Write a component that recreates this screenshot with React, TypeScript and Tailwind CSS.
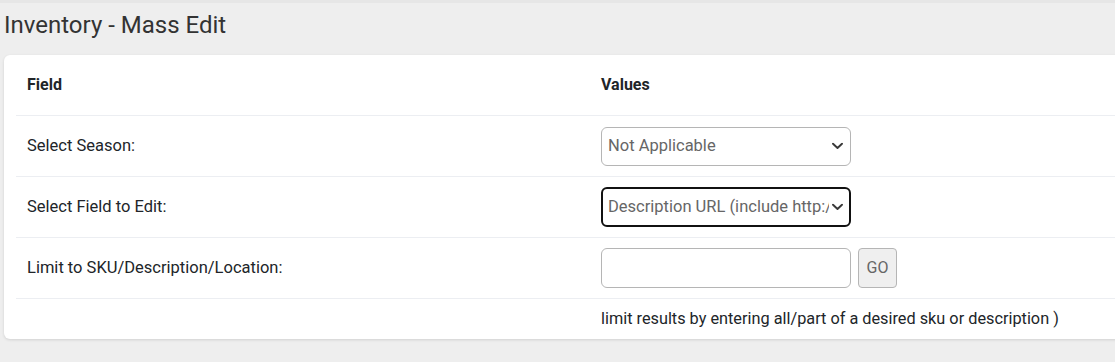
import React from "react";

const font = { fontFamily: "Roboto, 'Liberation Sans', sans-serif" };

function Chevron() {
  return (
    <svg className="absolute right-[8px] top-1/2 -translate-y-1/2 pointer-events-none" width="11" height="7" viewBox="0 0 11 7" fill="none">
      <path d="M1 1.2 L5.5 5.5 L10 1.2" stroke="#3a3a3a" strokeWidth="1.9" strokeLinecap="round" strokeLinejoin="round" />
    </svg>
  );
}

export default function App() {
  return (
    <div className="w-[1115px] h-[362px] overflow-hidden bg-[#eeeeee] border-t-[3px] border-[#e6e6e6]" style={font}>
      <div className="h-[52px] pl-[4px] pt-[10px]">
        <h1 className="text-[24px] text-[#333333] font-normal leading-[24px]">Inventory - Mass Edit</h1>
      </div>
      <div className="ml-[4px] w-[1125px] bg-white rounded-[6px] shadow-[0_1px_3px_rgba(0,0,0,0.12)] px-[12px]">
        <div className="flex h-[60px] items-center text-[16px] font-bold text-[#212529]">
          <div className="w-[574px] pl-[11px]">Field</div>
          <div className="pl-[11px]">Values</div>
        </div>
        <div className="flex h-[61px] items-center border-t border-[#eceef2] text-[16.5px] text-[#212529]">
          <div className="w-[574px] pl-[11px]">Select Season:</div>
          <div className="pl-[11px]">
            <div className="relative w-[250px]">
              <select className="appearance-none w-[250px] h-[39px] rounded-[6px] border border-[#b5b5b5] bg-white pl-[6px] pr-[20px] text-[16.5px] text-[#666666] outline-none" style={font} defaultValue="na">
                <option value="na">Not Applicable</option>
              </select>
              <Chevron />
            </div>
          </div>
        </div>
        <div className="flex h-[61px] items-center border-t border-[#eceef2] text-[16.5px] text-[#212529]">
          <div className="w-[574px] pl-[11px]">Select Field to Edit:</div>
          <div className="pl-[11px]">
            <div className="relative w-[250px]">
              <select className="appearance-none w-[250px] h-[40px] rounded-[6px] border-2 border-[#111111] bg-white pl-[5px] pr-[20px] text-[16.5px] text-[#666666] outline-none" style={font} defaultValue="url">
                <option value="url">Description URL (include http://)</option>
              </select>
              <Chevron />
            </div>
          </div>
        </div>
        <div className="flex h-[61px] items-center border-t border-[#eceef2] text-[16.5px] text-[#212529]">
          <div className="w-[574px] pl-[11px]">Limit to SKU/Description/Location:</div>
          <div className="pl-[11px] flex items-center gap-[7px]">
            <input type="text" className="w-[250px] h-[40px] rounded-[6px] border border-[#b5b5b5] bg-white px-[6px] text-[16px] outline-none" />
            <button className="w-[39px] h-[40px] rounded-[4px] border border-[#b5b5b5] bg-[#efefef] text-[16px] text-[#666666]" style={font}>GO</button>
          </div>
        </div>
        <div className="flex h-[41px] items-center border-t border-[#eceef2] text-[16.3px] text-[#212529]">
          <div className="w-[574px] pl-[11px]"></div>
          <div className="pl-[11px]">limit results by entering all/part of a desired sku or description )</div>
        </div>
      </div>
    </div>
  );
}
